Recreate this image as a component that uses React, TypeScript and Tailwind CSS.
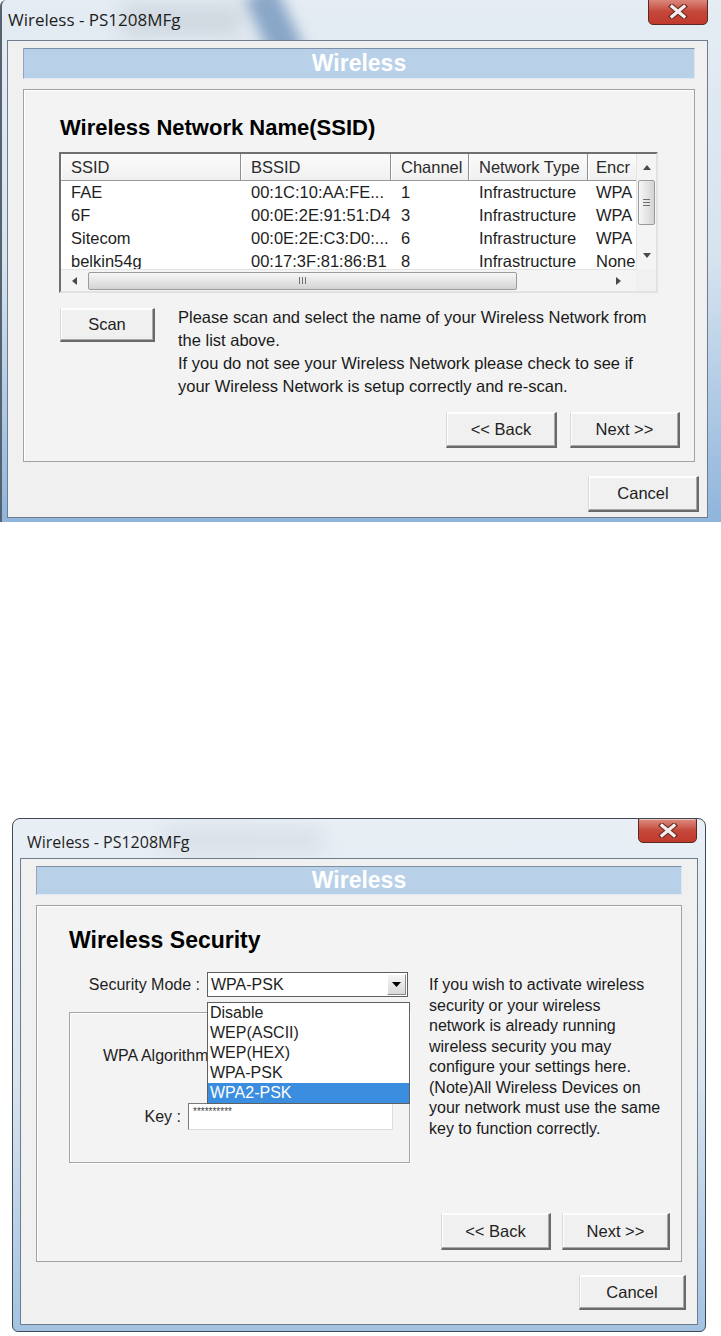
import React from "react";

const sans = "font-['Liberation_Sans',Arial,sans-serif]";
const segoe = "font-['Open_Sans','Noto_Sans',sans-serif]";

function CloseButton({ className }: { className: string }) {
  return (
    <div
      className={`absolute ${className} rounded-b-[5px] rounded-t-[2px] border border-[#5b2722] bg-gradient-to-b from-[#dc8c82] via-[#c4483b] to-[#c13a2c] shadow-[inset_0_1px_0_rgba(255,255,255,0.45)] flex items-center justify-center`}
    >
      <svg width="20" height="15" viewBox="0 0 20 15">
        <path d="M4 2.5 L16 12.5 M16 2.5 L4 12.5" stroke="#6b2a24" strokeWidth="5.5" strokeLinecap="square" />
        <path d="M4 2.5 L16 12.5 M16 2.5 L4 12.5" stroke="#f4efee" strokeWidth="3.2" strokeLinecap="square" />
      </svg>
    </div>
  );
}

function Btn({ label, className }: { label: string; className: string }) {
  return (
    <div
      className={`flex items-center justify-center bg-[#f0f0f0] border-t border-l border-t-[#fcfcfc] border-l-[#d8d8d8] border-b-2 border-r-2 border-b-[#6a6a6a] border-r-[#6a6a6a] shadow-[inset_-1px_-1px_0_#a8a8a8,inset_1px_1px_0_#fff] text-[16.5px] text-[#1e1e1e] ${className}`}
    >
      {label}
    </div>
  );
}

function BlueBar({ className }: { className: string }) {
  return (
    <div
      className={`flex items-center justify-center bg-[#b9d0e9] border-t border-l border-t-[#7d8fa4] border-l-[#93a5b9] border-b border-r border-b-[#dfe8f2] border-r-[#dfe8f2] text-[23px] font-bold text-white ${className}`}
    >
      Wireless
    </div>
  );
}

const cols = [
  { name: "SSID", w: "w-[180px]", p: "pl-[10px]" },
  { name: "BSSID", w: "w-[150px]", p: "pl-[10px]" },
  { name: "Channel", w: "w-[78px]", p: "pl-[10px]" },
  { name: "Network Type", w: "w-[119px]", p: "pl-[10px]" },
  { name: "Encr", w: "w-[48px]", p: "pl-[8px]" },
];

const nets = [
  ["FAE", "00:1C:10:AA:FE...", "1", "Infrastructure", "WPA"],
  ["6F", "00:0E:2E:91:51:D4", "3", "Infrastructure", "WPA"],
  ["Sitecom", "00:0E:2E:C3:D0:...", "6", "Infrastructure", "WPA"],
  ["belkin54g", "00:17:3F:81:86:B1", "8", "Infrastructure", "None"],
];

function VScroll() {
  return (
    <div className="w-[20px] h-full bg-[#f4f4f4] border-l border-[#e4e4e4] flex flex-col items-center">
      <div className="h-[26px] flex items-center justify-center">
        <svg width="8" height="5" viewBox="0 0 8 5">
          <path d="M4 0 L8 5 H0 Z" fill="#4a4a4a" />
        </svg>
      </div>
      <div className="w-[17px] h-[45px] rounded-[2px] border border-[#9b9b9b] bg-gradient-to-r from-[#f7f7f7] to-[#d4d4d4] flex flex-col items-center justify-center gap-[2px]">
        <div className="w-[7px] h-px bg-[#6f6f6f]" />
        <div className="w-[7px] h-px bg-[#6f6f6f]" />
        <div className="w-[7px] h-px bg-[#6f6f6f]" />
      </div>
      <div className="flex-1" />
      <div className="h-[28px] flex items-center justify-center">
        <svg width="8" height="5" viewBox="0 0 8 5">
          <path d="M0 0 H8 L4 5 Z" fill="#4a4a4a" />
        </svg>
      </div>
    </div>
  );
}

function HScroll() {
  return (
    <div className="w-[575px] h-full bg-[#f4f4f4] border-t border-[#e4e4e4] flex items-center">
      <div className="w-[27px] flex justify-center">
        <svg width="5" height="8" viewBox="0 0 5 8">
          <path d="M5 0 V8 L0 4 Z" fill="#4a4a4a" />
        </svg>
      </div>
      <div className="w-[429px] h-[18px] rounded-[2px] border border-[#9b9b9b] bg-gradient-to-b from-[#f7f7f7] to-[#d4d4d4] flex items-center justify-center gap-[2px]">
        <div className="w-px h-[7px] bg-[#6f6f6f]" />
        <div className="w-px h-[7px] bg-[#6f6f6f]" />
        <div className="w-px h-[7px] bg-[#6f6f6f]" />
      </div>
      <div className="flex-1 flex justify-end pr-[15px]">
        <svg width="5" height="8" viewBox="0 0 5 8">
          <path d="M0 0 V8 L5 4 Z" fill="#4a4a4a" />
        </svg>
      </div>
    </div>
  );
}

function NetList() {
  return (
    <div className="w-[599px] h-[141px] border-2 border-t-[#6f6f6f] border-l-[#6f6f6f] border-r-[#e2e2e2] border-b-[#e2e2e2] bg-white flex flex-col">
      <div className="flex h-[115px]">
        <div className="w-[575px] overflow-hidden">
          <div className="flex h-[27px] bg-gradient-to-b from-[#fbfbfb] to-[#f0f0f0] border-b border-[#9a9a9a]">
            {cols.map((c, i) => (
              <div
                key={c.name}
                className={`${c.w} ${c.p} shrink-0 flex items-center ${
                  i < 4 ? "border-r border-r-[#8f8f8f]" : ""
                } shadow-[inset_1px_0_0_#fff] text-[16.5px] text-[#2a2a2a] whitespace-nowrap`}
              >
                {c.name}
              </div>
            ))}
          </div>
          {nets.map((r) => (
            <div key={r[0]} className="flex h-[23px]">
              {r.map((v, i) => (
                <div
                  key={i}
                  className={`${cols[i].w} ${cols[i].p} shrink-0 text-[16.5px] leading-[23px] text-[#1e1e1e] whitespace-nowrap`}
                >
                  {v}
                </div>
              ))}
            </div>
          ))}
        </div>
        <VScroll />
      </div>
      <div className="flex h-[22px]">
        <HScroll />
        <div className="w-[20px] bg-[#f0f0f0]" />
      </div>
    </div>
  );
}

function TopWindow() {
  return (
    <div className="relative w-[721px] h-[522px] rounded-tl-[6px] border-l-2 border-l-[#56626e] bg-gradient-to-b from-[#e5ecf3] via-[#d6e3ef] to-[#8fb5dc] overflow-hidden">
      <div className="absolute left-[255px] top-[-12px] w-[34px] h-[70px] rotate-[-25deg] bg-[#4d79ab] opacity-60 blur-[7px]" />
      <div className="absolute left-[120px] top-[5px] w-[120px] h-[30px] bg-[#b9c3cc] opacity-50 blur-[10px]" />
      <div className={`relative h-[40px] pl-[6px] pt-[8px] text-[17px] leading-[24px] text-[#1e1e1e] ${segoe}`}>
        Wireless - PS1208MFg
      </div>
      <CloseButton className="left-[646px] top-[-2px] w-[60px] h-[27px]" />
      <div className="relative ml-[5px] w-[701px] h-[478px] bg-[#f0f0f0] border border-[#6d7d8e] pl-[15px] pr-[12px] pt-[7px] flex flex-col">
        <BlueBar className="h-[31px]" />
        <div className="mt-[10px] h-[373px] border border-[#a3a3a3] bg-[#f3f3f3] shadow-[inset_1px_1px_0_#fff] flex flex-col">
          <div className="pl-[36px] mt-[25px] text-[22px] leading-[26px] font-bold text-black">
            Wireless Network Name(SSID)
          </div>
          <div className="ml-[35px] mt-[11px]">
            <NetList />
          </div>
          <div className="mt-[13px] ml-[36px] flex items-start gap-[23px]">
            <Btn label="Scan" className="mt-[2px] w-[95px] h-[34px] shrink-0" />
            <div className="text-[16.5px] leading-[23px] text-[#1a1a1a] whitespace-nowrap">
              <div>Please scan and select the name of your Wireless Network from</div>
              <div>the list above.</div>
              <div>If you do not see your Wireless Network please check to see if</div>
              <div>your Wireless Network is setup correctly and re-scan.</div>
            </div>
          </div>
          <div className="mt-[14px] flex justify-end gap-[13px] pr-[14px]">
            <Btn label="<< Back" className="w-[111px] h-[36px]" />
            <Btn label="Next >>" className="w-[110px] h-[36px]" />
          </div>
        </div>
        <div className="mt-[14px] flex justify-end mr-[-4px]">
          <Btn label="Cancel" className="w-[111px] h-[36px]" />
        </div>
      </div>
    </div>
  );
}

const modes = ["Disable", "WEP(ASCII)", "WEP(HEX)", "WPA-PSK", "WPA2-PSK"];

function BottomWindow() {
  return (
    <div className="relative ml-[12px] w-[694px] h-[514px] rounded-t-[8px] rounded-b-[6px] border border-[#3f4953] bg-gradient-to-b from-[#e9eff5] via-[#dae5ef] to-[#a3c2e2] overflow-hidden">
      <div className="absolute left-[150px] top-[8px] w-[160px] h-[26px] bg-[#c3ccd4] opacity-40 blur-[10px]" />
      <div className={`relative h-[39px] pl-[14px] pt-[12px] text-[16px] leading-[22px] text-[#1e1e1e] ${segoe}`}>
        Wireless - PS1208MFg
      </div>
      <CloseButton className="left-[625px] top-[-1px] w-[59px] h-[25px]" />
      <div className="relative ml-[7px] w-[678px] h-[467px] bg-[#f0f0f0] border border-[#6d7d8e] px-[15px] pt-[7px] flex flex-col">
        <BlueBar className="h-[29px]" />
        <div className="mt-[10px] h-[357px] border border-[#a3a3a3] bg-[#f3f3f3] shadow-[inset_1px_1px_0_#fff] flex flex-col">
          <div className="pl-[32px] mt-[20px] text-[23px] leading-[28px] font-bold text-black">Wireless Security</div>
          <div className="mt-[18px] flex">
            <div className="relative ml-[32px] w-[341px] shrink-0">
              <div className="flex items-center h-[25px]">
                <div className="w-[138px] pr-[7px] text-right text-[16px] text-[#1e1e1e] whitespace-nowrap">Security Mode :</div>
                <div className="w-[201px] h-[25px] bg-white border border-[#5f5f5f] flex">
                  <div className="flex-1 pl-[3px] text-[16px] leading-[23px] text-[#1e1e1e]">WPA-PSK</div>
                  <div className="w-[19px] m-[1px] bg-gradient-to-b from-[#f6f6f6] to-[#d8d8d8] border border-t-white border-l-white border-b-[#8a8a8a] border-r-[#8a8a8a] flex items-center justify-center">
                    <svg width="9" height="5" viewBox="0 0 9 5">
                      <path d="M0 0 H9 L4.5 5 Z" fill="#000" />
                    </svg>
                  </div>
                </div>
              </div>
              <div className="mt-[15px] h-[151px] border border-[#a5a5a5] shadow-[inset_1px_1px_0_#fff,1px_1px_0_#fff]">
                <div className="pl-[33px] mt-[33px] text-[16px] leading-[20px] text-[#1e1e1e]">WPA Algorithm</div>
                <div className="mt-[37px] flex items-start">
                  <div className="w-[111px] text-right text-[16px] leading-[27px] text-[#1e1e1e]">Key :</div>
                  <div className="ml-[7px] w-[205px] h-[27px] bg-white border border-t-[#7a7a7a] border-l-[#7a7a7a] border-b-[#dcdcdc] border-r-[#dcdcdc] pl-[4px] pt-[2px] text-[10px] leading-[12px] text-[#444]">
                    **********
                  </div>
                </div>
              </div>
              <div className="absolute left-[138px] top-[30px] w-[203px] border border-[#5f5f5f] bg-white">
                {modes.map((m) => (
                  <div
                    key={m}
                    className={`h-[20px] pl-[2px] text-[16px] leading-[20px] whitespace-nowrap ${
                      m === "WPA2-PSK" ? "bg-[#3b8de0] text-white" : "text-[#1e1e1e]"
                    }`}
                  >
                    {m}
                  </div>
                ))}
              </div>
            </div>
            <div className="ml-[19px] mt-[3px] text-[16px] leading-[20.5px] text-[#1a1a1a] whitespace-nowrap">
              <div>If you wish to activate wireless</div>
              <div>security or your wireless</div>
              <div>network is already running</div>
              <div>wireless security you may</div>
              <div>configure your settings here.</div>
              <div>(Note)All Wireless Devices on</div>
              <div>your network must use the same</div>
              <div>key to function correctly.</div>
            </div>
          </div>
          <div className="mt-auto mb-[11px] flex justify-end gap-[11px] pr-[11px]">
            <Btn label="<< Back" className="w-[110px] h-[37px]" />
            <Btn label="Next >>" className="w-[108px] h-[37px]" />
          </div>
        </div>
        <div className="mt-[13px] flex justify-end mr-[-4px]">
          <Btn label="Cancel" className="w-[107px] h-[35px]" />
        </div>
      </div>
    </div>
  );
}

export default function App() {
  return (
    <div className={`w-[721px] h-[1336px] bg-white overflow-hidden ${sans}`}>
      <TopWindow />
      <div className="h-[296px]" />
      <BottomWindow />
    </div>
  );
}
